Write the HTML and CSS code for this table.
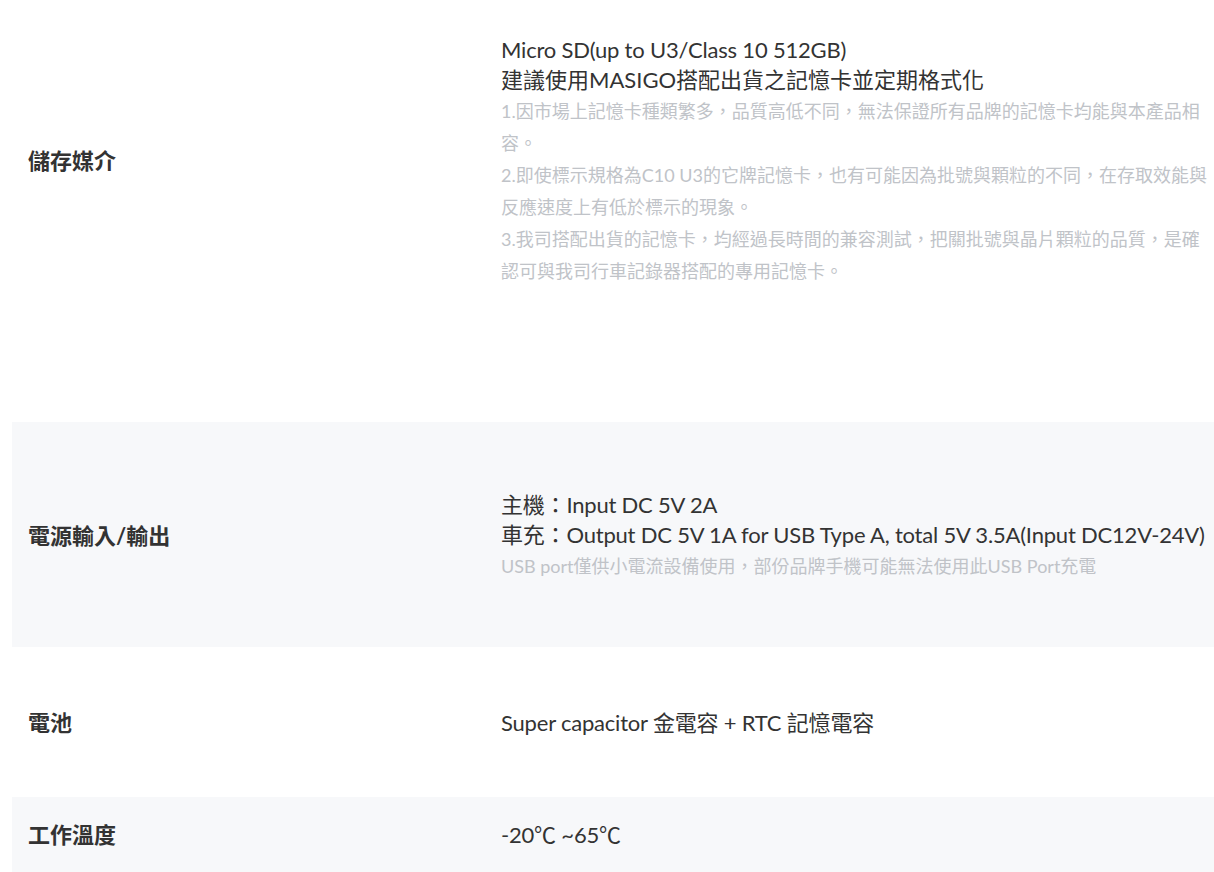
FILE: index.html
```html
<!DOCTYPE html>
<html lang="zh-Hant">
<head>
<meta charset="utf-8">
<title>規格</title>
<link rel="stylesheet" href="styles.css">
</head>
<body>
<div class="spec">
  <div class="row row-storage">
    <div class="label">儲存媒介</div>
    <div class="value">
      <div class="main">Micro SD(up to U3/Class 10 512GB)</div>
      <div class="main zh">建議使用MASIGO搭配出貨之記憶卡並定期格式化</div>
      <div class="note">1.因市場上記憶卡種類繁多，品質高低不同，無法保證所有品牌的記憶卡均能與本產品相容。</div>
      <div class="note">2.即使標示規格為C10 U3的它牌記憶卡，也有可能因為批號與顆粒的不同，在存取效能與反應速度上有低於標示的現象。</div>
      <div class="note">3.我司搭配出貨的記憶卡，均經過長時間的兼容測試，把關批號與晶片顆粒的品質，是確認可與我司行車記錄器搭配的專用記憶卡。</div>
    </div>
  </div>
  <div class="row row-power alt">
    <div class="label">電源輸入/輸出</div>
    <div class="value">
      <div class="main">主機：Input DC 5V 2A</div>
      <div class="main">車充：Output DC 5V 1A for USB Type A, total 5V 3.5A(Input DC12V-24V)</div>
      <div class="note">USB port僅供小電流設備使用，部份品牌手機可能無法使用此USB Port充電</div>
    </div>
  </div>
  <div class="row row-battery">
    <div class="label">電池</div>
    <div class="value">
      <div class="main">Super capacitor 金電容 + RTC 記憶電容</div>
    </div>
  </div>
  <div class="row row-temp alt">
    <div class="label">工作溫度</div>
    <div class="value">
      <div class="main">-20℃ ~65℃</div>
    </div>
  </div>
</div>
</body>
</html>
```

FILE: styles.css
```css
html, body {
  margin: 0;
  padding: 0;
  background: #ffffff;
}

body {
  font-family: Lato, "Noto Sans CJK TC", "Noto Sans", sans-serif;
  color: #333333;
  overflow: hidden;
}

.spec {
  margin-left: 12px;
  width: 1202px;
}

.row {
  display: grid;
  grid-template-columns: 473px 714px;
  align-items: center;
  padding-left: 16px;
}

.alt {
  background: #f7f8fa;
}

.row-storage {
  padding-top: 35px;
  padding-bottom: 135px;
}

.row-power {
  padding-top: 68px;
  padding-bottom: 65px;
}

.row-battery {
  padding-top: 61px;
  padding-bottom: 59px;
}

.row-temp {
  padding-top: 23px;
  padding-bottom: 23px;
}

.label {
  font-size: 22px;
  font-weight: 700;
  line-height: 30px;
  color: #333333;
}

.main {
  font-size: 22px;
  line-height: 30px;
  letter-spacing: -0.2px;
  color: #333333;
  white-space: nowrap;
}

.main.zh {
  letter-spacing: 0;
}

.note {
  font-size: 18px;
  line-height: 32px;
  color: #c0c3c8;
  max-width: 708px;
}
```
